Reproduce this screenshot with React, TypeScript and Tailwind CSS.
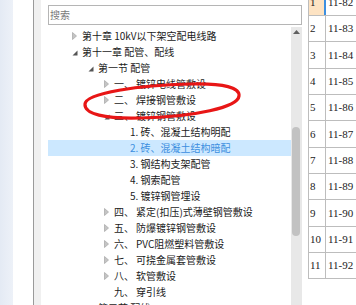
import React from "react";

type Row = {
  level: number;
  arrow: "none" | "collapsed" | "expanded";
  label?: string;
  text: string;
  selected?: boolean;
};

const rows: Row[] = [
  { level: 0, arrow: "collapsed", text: "第十章 10kV以下架空配电线路" },
  { level: 0, arrow: "expanded", text: "第十一章 配管、配线" },
  { level: 1, arrow: "expanded", text: "第一节 配管" },
  { level: 2, arrow: "collapsed", label: "一、", text: "镀锌电线管敷设" },
  { level: 2, arrow: "collapsed", label: "二、", text: "焊接钢管敷设" },
  { level: 2, arrow: "expanded", label: "三、", text: "镀锌钢管敷设" },
  { level: 3, arrow: "none", text: "1. 砖、混凝土结构明配" },
  { level: 3, arrow: "none", text: "2. 砖、混凝土结构暗配", selected: true },
  { level: 3, arrow: "none", text: "3. 钢结构支架配管" },
  { level: 3, arrow: "none", text: "4. 钢索配管" },
  { level: 3, arrow: "none", text: "5. 镀锌钢管埋设" },
  { level: 2, arrow: "collapsed", label: "四、", text: "紧定(扣压)式薄壁钢管敷设" },
  { level: 2, arrow: "collapsed", label: "五、", text: "防爆镀锌钢管敷设" },
  { level: 2, arrow: "collapsed", label: "六、", text: "PVC阻燃塑料管敷设" },
  { level: 2, arrow: "collapsed", label: "七、", text: "可挠金属套管敷设" },
  { level: 2, arrow: "collapsed", label: "八、", text: "软管敷设" },
  { level: 2, arrow: "none", label: "九、", text: "穿引线" },
  { level: 1, arrow: "expanded", text: "第二节 配线" },
];

const tableRows = [
  { n: "1", code: "11-82", h: 26 },
  { n: "2", code: "11-83", h: 26 },
  { n: "3", code: "11-84", h: 27 },
  { n: "4", code: "11-85", h: 26 },
  { n: "5", code: "11-86", h: 26 },
  { n: "6", code: "11-87", h: 27 },
  { n: "7", code: "11-88", h: 26 },
  { n: "8", code: "11-89", h: 26 },
  { n: "9", code: "11-90", h: 27 },
  { n: "10", code: "11-91", h: 26 },
  { n: "11", code: "11-92", h: 26 },
];

const indents = ["w-[18px]", "w-[34px]", "w-[50px]", "w-[66px]"];

function Arrow({ kind }: { kind: Row["arrow"] }) {
  return (
    <span className="w-[16px] h-full flex items-center justify-center shrink-0">
      {kind === "collapsed" && (
        <svg width="5" height="8" viewBox="0 0 5 8">
          <path d="M0.5 0.5 L4.5 4 L0.5 7.5 Z" fill="#c4c4c4" stroke="#acacac" strokeWidth="0.8" />
        </svg>
      )}
      {kind === "expanded" && (
        <svg width="6" height="6" viewBox="0 0 6 6" className="ml-[1px] mt-[1px]">
          <path d="M5.5 0.5 L5.5 5.5 L0.5 5.5 Z" fill="#555555" />
        </svg>
      )}
    </span>
  );
}

export default function App() {
  const font = { fontFamily: '"Noto Sans CJK SC", "Noto Sans", sans-serif' };
  return (
    <div className="relative w-[356px] h-[305px] overflow-hidden bg-white flex" style={font}>
      <div className="w-[13px] h-full bg-gradient-to-r from-[#e4eaf4] to-[#edf1f8] shrink-0" />
      <div className="w-[20px] h-full bg-white shrink-0" />
      <div className="w-px h-full bg-[#9a9a9a] shrink-0" />
      <div className="w-[7px] h-full bg-[#f0f0f0] shrink-0" />
      <div className="w-[7px] h-full bg-white shrink-0" />

      <div className="w-[254px] h-full flex flex-col shrink-0">
        <div className="mt-[5px] h-[20px] border border-[#b5b5b5] flex items-center pl-[1px] text-[10px] text-[#7a7a7a] leading-none">
          搜索
        </div>
        <div className="mt-[2px] flex flex-1 min-h-0">
          <div className="w-[243px] pt-px overflow-hidden">
            {rows.map((r, i) => (
              <div
                key={i}
                className={`h-[16px] flex items-center text-[10px] leading-none whitespace-nowrap ${
                  r.selected ? "bg-[#cce8ff] text-[#3d8fe0]" : "text-[#1b1b1b]"
                }`}
              >
                <span className={`${indents[r.level]} shrink-0`} />
                <Arrow kind={r.arrow} />
                {r.label && <span className="w-[22px] shrink-0">{r.label}</span>}
                <span>{r.text}</span>
              </div>
            ))}
          </div>
          <div className="w-[11px] bg-[#e8e8e8] flex flex-col items-start">
            <div className="w-[10px] flex justify-center pt-[3px]">
              <svg width="7" height="4" viewBox="0 0 7 4">
                <path d="M0 4 L3.5 0 L7 4 Z" fill="#606060" />
              </svg>
            </div>
            <div className="mt-[93px] ml-[1px] w-[8px] h-[109px] rounded-[4px] bg-[#c2c2c2]" />
          </div>
        </div>
      </div>

      <div className="w-[6px] h-full bg-white shrink-0" />

      <div className="flex-1 h-full overflow-hidden">
        <div className="mt-[-10px] border-l border-[#bdbdbd]" style={{ fontFamily: '"Liberation Serif", "DejaVu Serif", serif' }}>
          {tableRows.map((r, i) => (
            <div key={i} className="flex border-b border-[#bdbdbd] text-[11px] text-[#222]" style={{ height: r.h }}>
              <div
                className={`w-[17px] shrink-0 flex items-center pl-[1px] ${
                  i === 0 ? "bg-[#fde3c3] border-r-2 border-[#3d8fe0]" : "border-r border-[#bdbdbd]"
                }`}
              >
                {r.n}
              </div>
              <div className="flex-1 flex items-center pl-[2px] whitespace-nowrap">{r.code}</div>
            </div>
          ))}
        </div>
      </div>

      <svg className="absolute left-0 top-0 pointer-events-none" width="356" height="305" viewBox="0 0 356 305">
        <path
          d="M85,104 C86,93 140,85 190,84 C225,83 240,88 239,96 C238,107 195,117 140,118 C105,119 84,114 85,104 Z"
          fill="none"
          stroke="#e81616"
          strokeWidth="3.2"
        />
      </svg>
    </div>
  );
}
